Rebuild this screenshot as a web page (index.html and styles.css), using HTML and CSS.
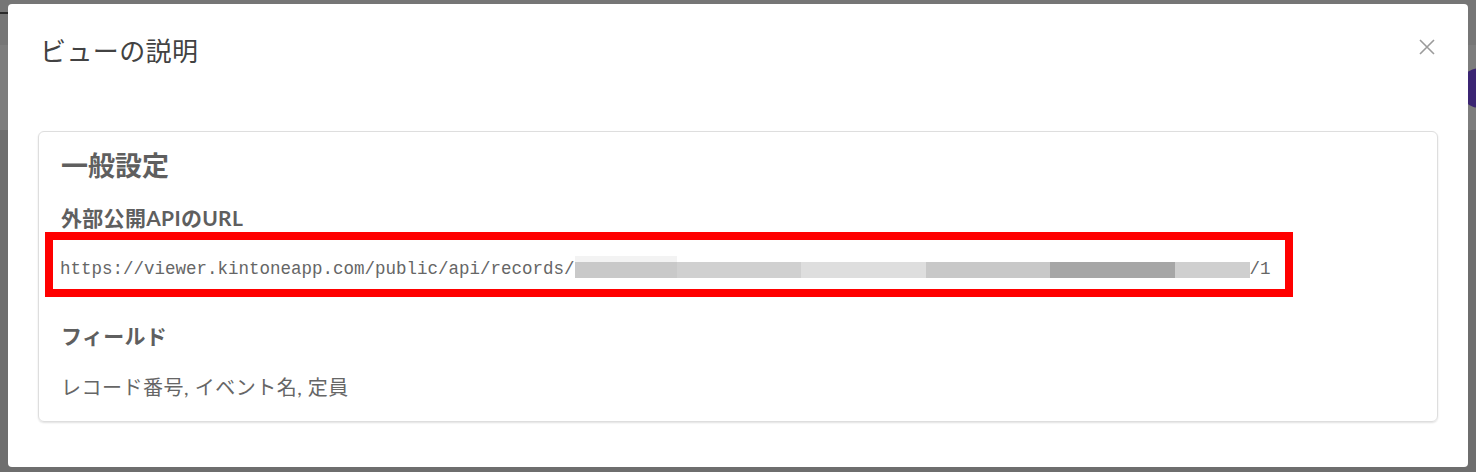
FILE: index.html
```html
<!DOCTYPE html>
<html lang="ja">

<head>
  <meta charset="UTF-8">
  <meta name="viewport" content="width=device-width, initial-scale=1.0">
  <title>ビューの説明</title>
  <link rel="stylesheet" href="styles.css">
</head>

<body>
  <!-- Page behind the dialog (dimmed) -->
  <div class="page">
    <div class="page-top">
      <div class="tab-mark"></div>
    </div>
    <div class="page-band">
      <div class="avatar"></div>
    </div>
  </div>

  <div class="overlay">
    <div class="modal">
      <header class="modal-header">
        <h1 class="modal-title">ビューの説明</h1>
        <button class="modal-close" aria-label="閉じる">
          <svg width="16" height="16" viewBox="0 0 16 16">
            <path d="M1 1 L15 15 M15 1 L1 15" stroke="#9b9b9b" stroke-width="1.6" fill="none" />
          </svg>
        </button>
      </header>

      <section class="card">
        <h2 class="card-title">一般設定</h2>
        <h3 class="field-label">外部公開APIのURL</h3>
        <div class="url-box">
          <span class="url-text">https://viewer.kintoneapp.com/public/api/records/</span><span class="redacted">
            <span class="blk blk-1"></span>
            <span class="blk blk-2"></span>
            <span class="blk blk-3"></span>
            <span class="blk blk-4"></span>
            <span class="blk blk-5"></span>
            <span class="blk blk-6"></span>
          </span><span class="url-text">/1</span>
        </div>

        <h3 class="field-label field-gap">フィールド</h3>
        <p class="field-value">レコード番号, イベント名, 定員</p>
      </section>
    </div>
  </div>
</body>

</html>
```

FILE: styles.css
```css
/* Basic Reset */
* {
  margin: 0;
  padding: 0;
  box-sizing: border-box;
}

body {
  font-family: 'Lato', 'Noto Sans CJK JP', sans-serif;
  background-color: #6e6e6e;
  width: 1476px;
  height: 472px;
  overflow: hidden;
}

/* Dimmed page behind */
.page-top {
  height: 45px;
  background-color: #767676;
  padding-top: 12px;
}

.tab-mark {
  width: 8px;
  height: 2px;
  background-color: #2a2a2a;
}

.page-band {
  height: 85px;
  background-color: #7d7d7d;
  display: flex;
  justify-content: flex-end;
  align-items: center;
  overflow: hidden;
}

.avatar {
  width: 40px;
  height: 40px;
  border-radius: 50%;
  background-color: #3b2573;
  margin-right: -24px;
  flex-shrink: 0;
}

/* Dialog */
.overlay {
  position: fixed;
  top: 0;
  left: 0;
  right: 0;
  bottom: 0;
  padding: 4px 8px 5px;
}

.modal {
  position: relative;
  background-color: #fff;
  border-radius: 4px;
  height: 463px;
  padding: 0 30px;
}

.modal-header {
  height: 127px;
}

.modal-title {
  padding-top: 29px;
  padding-left: 2px;
  font-size: 26px;
  line-height: 36px;
  font-weight: 400;
  letter-spacing: 0.4px;
  color: #424242;
}

.modal-close {
  position: absolute;
  top: 35px;
  right: 33px;
  width: 16px;
  height: 16px;
  border: none;
  background: none;
  cursor: pointer;
  display: flex;
}

/* Card */
.card {
  height: 291px;
  border: 1px solid #dedede;
  border-radius: 6px;
  box-shadow: 0 1px 2px rgba(0, 0, 0, 0.12);
  padding: 17px 22px 0;
  color: #5f5f5f;
}

.card-title {
  font-size: 27px;
  line-height: 34px;
  font-weight: 700;
}

.field-label {
  margin-top: 21px;
  font-size: 21px;
  line-height: 28px;
  font-weight: 700;
  letter-spacing: 0.3px;
}

.field-gap {
  margin-top: 25px;
}

.url-box {
  margin-left: -16px;
  width: 1248px;
  height: 65px;
  border: 8px solid #ff0000;
  padding: 19px 0 0 7px;
  display: flex;
  align-items: flex-start;
}

.url-text {
  font-family: 'Liberation Mono', monospace;
  font-size: 17.5px;
  line-height: 20px;
  color: #666;
  white-space: pre;
}

.redacted {
  display: flex;
  height: 20px;
  align-items: flex-end;
  padding-bottom: 1px;
}

.blk {
  display: block;
  height: 16px;
}

.blk-1 {
  width: 102px;
  background: linear-gradient(#f3f3f3 0 6px, #c9c9c9 6px);
  height: 22px;
}

.blk-2 {
  width: 124px;
  background-color: #d0d0d0;
}

.blk-3 {
  width: 125px;
  background-color: #dedede;
}

.blk-4 {
  width: 124px;
  background-color: #c8c8c8;
}

.blk-5 {
  width: 125px;
  background-color: #a6a6a6;
}

.blk-6 {
  width: 75px;
  background-color: #cfcfcf;
}

.field-value {
  margin-top: 23px;
  font-size: 20px;
  line-height: 28px;
  letter-spacing: 0.5px;
  color: #666;
}
```
